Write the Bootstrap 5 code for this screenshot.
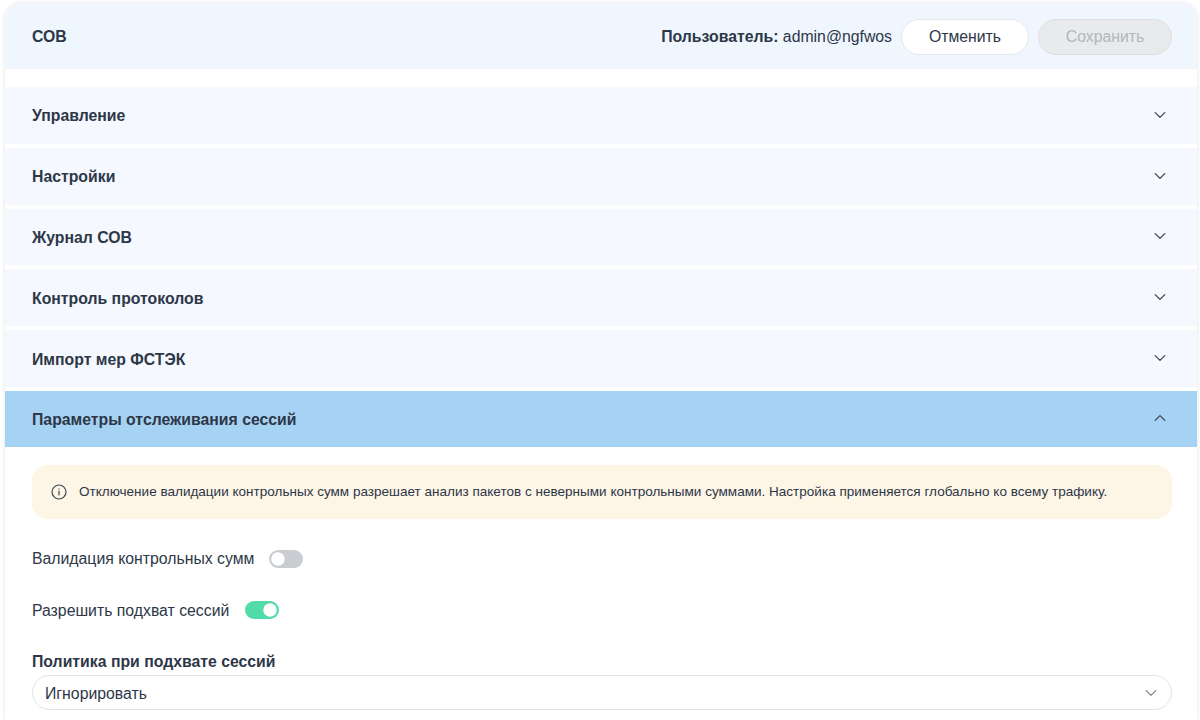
<!DOCTYPE html>
<html lang="ru">
<head>
    <meta charset="UTF-8">
    <meta name="viewport" content="width=device-width, initial-scale=1.0">
    <title>СОВ</title>
    <link href="https://cdn.jsdelivr.net/npm/bootstrap@5.3.0/dist/css/bootstrap.min.css" rel="stylesheet">
    <style>
        html, body {
            height: 720px;
            overflow: hidden;
        }
        body {
            background-color: #fff;
            color: #2d3748;
            font-family: "Liberation Sans", Arial, sans-serif;
            font-size: 15.8px;
        }
        .page-shell {
            margin: 3px 3px 0 5px;
            border-top-left-radius: 16px;
            border-top-right-radius: 16px;
            box-shadow: 0 0 4px rgba(0, 0, 0, 0.12);
            height: 717px;
            overflow: hidden;
            background: #fff;
        }
        .top-bar {
            height: 66px;
            padding: 2px 25px 0 27px;
            background: #eff6fe;
            margin-bottom: 18px;
        }
        .top-title {
            font-weight: 700;
        }
        .user-name {
            margin-right: 9px;
        }
        .user-name b {
            font-weight: 700;
        }
        .pill-btn {
            height: 36px;
            border-radius: 18px;
            font-size: 15.8px;
            padding: 0;
            line-height: 34px;
        }
        .btn-cancel {
            width: 128px;
            background: #fff;
            border: 1px solid #e3e6ea;
            color: #2d3748;
            margin-right: 9px;
        }
        .btn-save, .btn-save:disabled {
            width: 134px;
            background: #e9eaec;
            border: 1px solid #dcdee1;
            color: #b2b6bc;
            opacity: 1;
        }
        .sect-row {
            height: 56.8px;
            margin-bottom: 4px;
            padding: 0 30px 0 27px;
            background: #f5f9ff;
            font-weight: 700;
        }
        .sect-row span {
            padding-top: 1.8px;
        }
        .sect-row.sect-open {
            height: 56px;
            margin-bottom: 0;
            background: #a6d2f4;
        }
        .sect-body {
            padding: 18px 25px 0 27px;
        }
        .info-box {
            height: 54px;
            padding: 0 19px;
            background: #fdf5e6;
            border-radius: 16px;
            font-size: 13.54px;
            margin-bottom: 28px;
        }
        .info-ico {
            margin-right: 12px;
        }
        .sw-row {
            height: 24px;
            margin-bottom: 27px;
        }
        .sw-row + .sw-row label {
            padding-top: 2px;
        }
        .sw-row .form-check-input {
            width: 34px;
            height: 18px;
            margin: 0 0 0 15px;
            float: none;
            border: 0;
            background-color: #c9ccd1;
            box-shadow: none;
            --bs-form-switch-bg: url("data:image/svg+xml,%3csvg xmlns='http://www.w3.org/2000/svg' viewBox='-4 -4 8 8'%3e%3ccircle r='3' fill='%23fff'/%3e%3c/svg%3e");
        }
        .sw-row + .sw-row .form-check-input {
            margin-left: 15.4px;
        }
        .sw-row .form-check-input:checked {
            background-color: #50dba8;
        }
        .field-label {
            font-weight: 700;
            padding-top: 1px;
            margin-bottom: 1px;
            line-height: 24px;
        }
        .form-select.pill-select {
            height: 35px;
            padding: 2px 40px 0 12px;
            border-radius: 18px;
            border-color: #e1e3e6;
            color: #2d3748;
            font-size: 15.8px;
            background-image: none;
        }
        .select-chev {
            top: 11px;
            right: 14px;
            pointer-events: none;
            stroke: #808a96;
        }
        .chev {
            width: 14px;
            height: 14px;
            margin-bottom: 1px;
            fill: none;
            stroke-width: 1.3;
            stroke-linecap: round;
            stroke-linejoin: round;
        }
        .sect-row .chev {
            stroke: #3d4753;
        }
    </style>
</head>
<body>
    <div class="page-shell">
        <div class="top-bar d-flex align-items-center">
            <div class="top-title">СОВ</div>
            <div class="user-name ms-auto"><b>Пользователь:</b> admin@ngfwos</div>
            <button type="button" class="btn pill-btn btn-cancel">Отменить</button>
            <button type="button" class="btn pill-btn btn-save" disabled>Сохранить</button>
        </div>

        <div class="sect-row d-flex align-items-center justify-content-between">
            <span>Управление</span>
            <svg class="chev" viewBox="0 0 14 14"><path d="m2.2 4.6 4.8 4.8 4.8-4.8"/></svg>
        </div>
        <div class="sect-row d-flex align-items-center justify-content-between">
            <span>Настройки</span>
            <svg class="chev" viewBox="0 0 14 14"><path d="m2.2 4.6 4.8 4.8 4.8-4.8"/></svg>
        </div>
        <div class="sect-row d-flex align-items-center justify-content-between">
            <span>Журнал СОВ</span>
            <svg class="chev" viewBox="0 0 14 14"><path d="m2.2 4.6 4.8 4.8 4.8-4.8"/></svg>
        </div>
        <div class="sect-row d-flex align-items-center justify-content-between">
            <span>Контроль протоколов</span>
            <svg class="chev" viewBox="0 0 14 14"><path d="m2.2 4.6 4.8 4.8 4.8-4.8"/></svg>
        </div>
        <div class="sect-row d-flex align-items-center justify-content-between">
            <span>Импорт мер ФСТЭК</span>
            <svg class="chev" viewBox="0 0 14 14"><path d="m2.2 4.6 4.8 4.8 4.8-4.8"/></svg>
        </div>
        <div class="sect-row sect-open d-flex align-items-center justify-content-between">
            <span>Параметры отслеживания сессий</span>
            <svg class="chev" viewBox="0 0 14 14"><path d="m2.2 9.4 4.8-4.8 4.8 4.8"/></svg>
        </div>

        <div class="sect-body">
            <div class="info-box d-flex align-items-center">
                <svg class="info-ico flex-shrink-0" width="16" height="16" viewBox="0 0 16 16" fill="none" stroke="#3d4753" stroke-width="1.2" stroke-linecap="round"><circle cx="8" cy="8" r="7"/><path d="M8 7.3v3.7"/><path d="M8 4.8v.3"/></svg>
                <span>Отключение валидации контрольных сумм разрешает анализ пакетов с неверными контрольными суммами. Настройка применяется глобально ко всему трафику.</span>
            </div>
            <div class="sw-row form-switch p-0 d-flex align-items-center">
                <label for="sw-valid">Валидация контрольных сумм</label>
                <input class="form-check-input" type="checkbox" role="switch" id="sw-valid">
            </div>
            <div class="sw-row form-switch p-0 d-flex align-items-center">
                <label for="sw-hijack">Разрешить подхват сессий</label>
                <input class="form-check-input" type="checkbox" role="switch" id="sw-hijack" checked>
            </div>
            <div class="field-label">Политика при подхвате сессий</div>
            <div class="position-relative">
                <select class="form-select pill-select">
                    <option>Игнорировать</option>
                </select>
                <svg class="chev select-chev position-absolute" viewBox="0 0 14 14"><path d="m2.2 4.6 4.8 4.8 4.8-4.8"/></svg>
            </div>
        </div>
    </div>
    <script src="https://cdn.jsdelivr.net/npm/bootstrap@5.3.0/dist/js/bootstrap.bundle.min.js"></script>
</body>
</html>
